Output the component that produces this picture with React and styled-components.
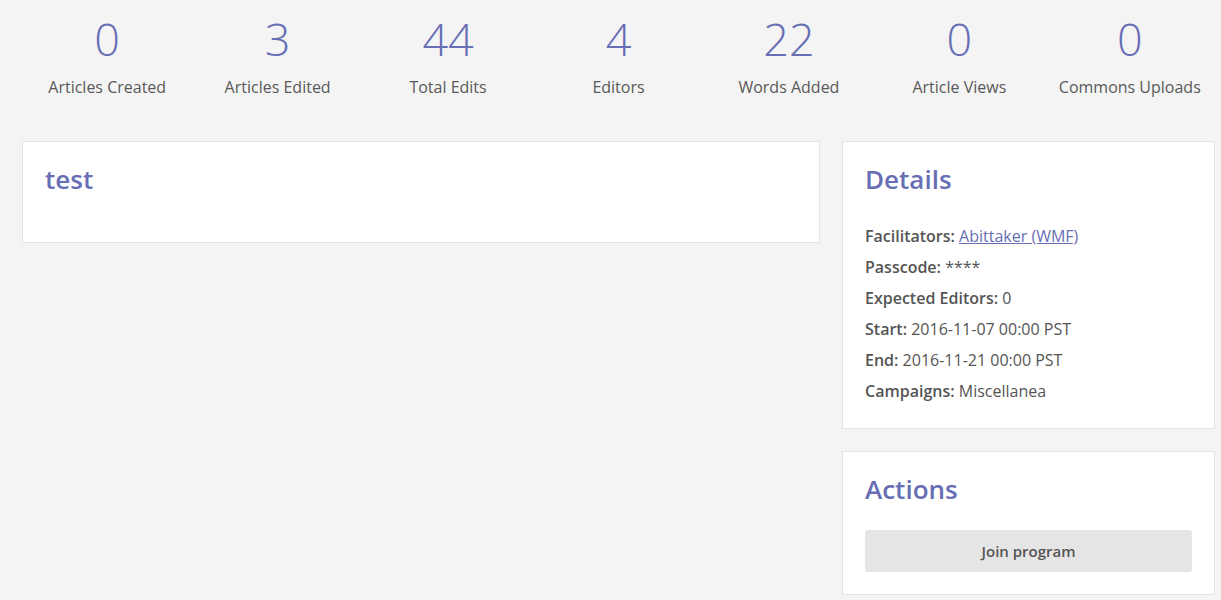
import React from "react";
import styled, { createGlobalStyle } from "styled-components";

const GlobalStyle = createGlobalStyle`
  html, body {
    margin: 0;
    padding: 0;
    background: #f4f4f4;
    font-family: "Open Sans", "Noto Sans", sans-serif;
    color: #555;
  }
  * { box-sizing: border-box; }
`;

const Page = styled.div`
  width: 1193px;
  margin-left: 22px;
`;

const StatsRow = styled.div`
  display: grid;
  grid-template-columns: repeat(7, 1fr);
  padding-top: 14px;
`;

const Stat = styled.div`
  display: flex;
  flex-direction: column;
  align-items: center;
`;

const StatNumber = styled.div`
  font-size: 45px;
  font-weight: 300;
  line-height: 50px;
  color: #676eb4;
`;

const StatLabel = styled.div`
  margin-top: 13px;
  font-size: 16px;
  line-height: 20px;
  color: #595959;
`;

const Columns = styled.div`
  display: grid;
  grid-template-columns: 798px 373px;
  column-gap: 22px;
  align-items: start;
  margin-top: 44px;
`;

const Side = styled.div`
  display: flex;
  flex-direction: column;
  gap: 22px;
`;

const Card = styled.section`
  background: #fff;
  border: 1px solid #e4e4e4;
  padding: 21px 22px ${(p) => p.$bottom || 22}px;
`;

const Heading = styled.h3`
  margin: 0;
  font-size: 26px;
  line-height: 33px;
  font-weight: 600;
  color: #676eb4;
`;

const DetailList = styled.div`
  margin-top: 25px;
`;

const DetailRow = styled.div`
  font-size: 16px;
  line-height: 31px;
  color: #555;
`;

const Key = styled.strong`
  font-weight: 600;
`;

const Link = styled.a`
  color: #676eb4;
  text-decoration: underline;
`;

const Button = styled.button`
  display: block;
  width: 100%;
  height: 42px;
  margin-top: 24px;
  border: none;
  border-radius: 3px;
  background: #e5e5e5;
  font-family: "Open Sans", "Noto Sans", sans-serif;
  font-size: 15px;
  font-weight: 600;
  color: #555;
  cursor: pointer;
`;

const stats = [
  ["0", "Articles Created"],
  ["3", "Articles Edited"],
  ["44", "Total Edits"],
  ["4", "Editors"],
  ["22", "Words Added"],
  ["0", "Article Views"],
  ["0", "Commons Uploads"],
];

export default function App() {
  return (
    <Page>
      <GlobalStyle />
      <StatsRow>
        {stats.map(([n, l]) => (
          <Stat key={l}>
            <StatNumber>{n}</StatNumber>
            <StatLabel>{l}</StatLabel>
          </Stat>
        ))}
      </StatsRow>
      <Columns>
        <Card $bottom={46}>
          <Heading>test</Heading>
        </Card>
        <Side>
          <Card $bottom={21}>
            <Heading>Details</Heading>
            <DetailList>
              <DetailRow>
                <Key>Facilitators:</Key> <Link href="#">Abittaker (WMF)</Link>
              </DetailRow>
              <DetailRow>
                <Key>Passcode:</Key> ****
              </DetailRow>
              <DetailRow>
                <Key>Expected Editors:</Key> 0
              </DetailRow>
              <DetailRow>
                <Key>Start:</Key> 2016-11-07 00:00 PST
              </DetailRow>
              <DetailRow>
                <Key>End:</Key> 2016-11-21 00:00 PST
              </DetailRow>
              <DetailRow>
                <Key>Campaigns:</Key> Miscellanea
              </DetailRow>
            </DetailList>
          </Card>
          <Card $bottom={22}>
            <Heading>Actions</Heading>
            <Button>Join program</Button>
          </Card>
        </Side>
      </Columns>
    </Page>
  );
}
